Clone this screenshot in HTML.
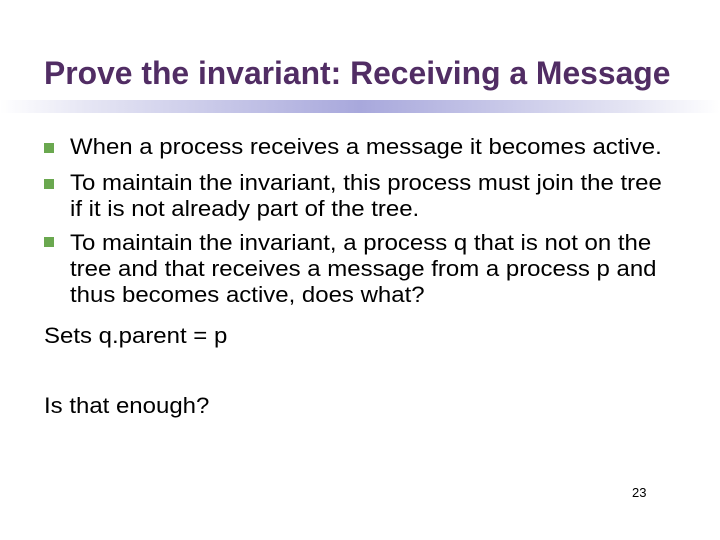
<!DOCTYPE html>
<html><head><style>
body{margin:0;width:720px;height:540px;background:#fff;position:relative;font-family:"Liberation Sans",sans-serif;overflow:hidden}
.t{position:absolute;left:44px;top:55px;font-size:32px;font-weight:bold;color:#512d64;white-space:nowrap;transform:scaleX(0.995);transform-origin:0 0}
.bar{position:absolute;left:0;top:100px;width:720px;height:13px;background:linear-gradient(90deg,rgba(255,255,255,0) 0%,#e6e6f4 12%,#a8a8dc 50%,#e6e6f4 88%,rgba(255,255,255,0) 100%)}
.b{position:absolute;left:70px;font-size:22px;line-height:26px;color:#000;white-space:nowrap;transform:scaleX(1.09);transform-origin:0 0}
.sq{position:absolute;left:44px;width:10px;height:10px;background:#6aa84f}
.p{position:absolute;left:44px;font-size:22px;color:#000;white-space:nowrap;transform:scaleX(1.09);transform-origin:0 0}
.n{position:absolute;left:632px;top:485px;font-size:13px}
</style></head><body>
<div class="t">Prove the invariant: Receiving a Message</div>
<div class="bar"></div>
<div class="sq" style="top:143px"></div>
<div class="b" style="top:134px">When a process receives a message it becomes active.</div>
<div class="sq" style="top:179px"></div>
<div class="b" style="top:170px">To maintain the invariant, this process must join the tree<br>if it is not already part of the tree.</div>
<div class="sq" style="top:237px"></div>
<div class="b" style="top:230px">To maintain the invariant, a process q that is not on the<br>tree and that receives a message from a process p and<br>thus becomes active, does what?</div>
<div class="p" style="top:323px">Sets q.parent = p</div>
<div class="p" style="top:393px">Is that enough?</div>
<div class="n">23</div>
</body></html>
